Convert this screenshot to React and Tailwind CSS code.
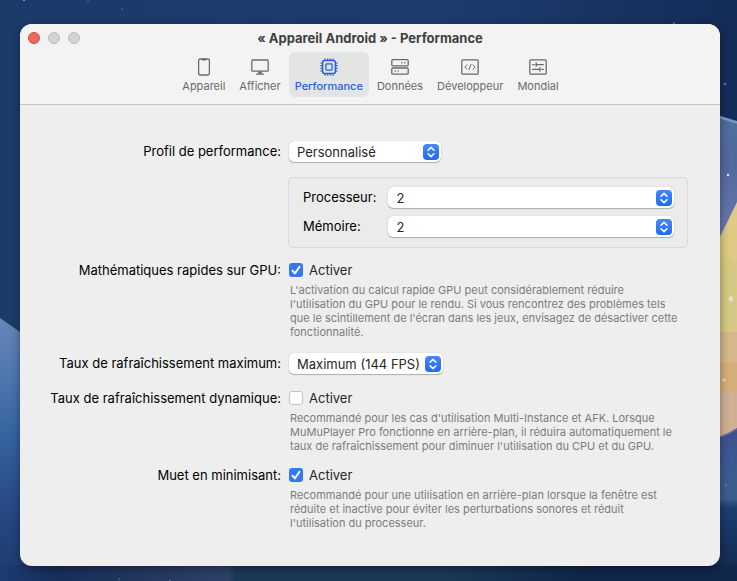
import { useState } from "react";

const tabs = [
  { id: "appareil", label: "Appareil", icon: PhoneIcon },
  { id: "afficher", label: "Afficher", icon: DisplayIcon },
  { id: "performance", label: "Performance", icon: ChipIcon },
  { id: "donnees", label: "Données", icon: DrivesIcon },
  { id: "developpeur", label: "Développeur", icon: CodeIcon },
  { id: "mondial", label: "Mondial", icon: SlidersIcon },
];

function Icon({ children }) {
  return (
    <svg
      viewBox="0 0 18 18"
      className="h-[18px] w-[18px]"
      fill="none"
      stroke="currentColor"
      strokeWidth="1.3"
      strokeLinecap="round"
      strokeLinejoin="round"
      aria-hidden="true"
    >
      {children}
    </svg>
  );
}

function PhoneIcon() {
  return (
    <Icon>
      <rect x="3.6" y="1" width="10.8" height="16" rx="1.8" />
      <path d="M7.3 1.6h3.4" strokeWidth="1.6" />
    </Icon>
  );
}

function DisplayIcon() {
  return (
    <Icon>
      <rect x="0.8" y="2" width="16.4" height="11.2" rx="1" />
      <path d="M7.4 13.6h3.2l.5 2.2H6.9z" fill="currentColor" stroke="none" />
      <path d="M5.6 16.2h6.8" strokeWidth="1.2" />
    </Icon>
  );
}

function ChipIcon() {
  return (
    <Icon>
      <rect x="2.6" y="2.6" width="12.8" height="12.8" rx="2" strokeWidth="1.5" />
      <rect x="5.9" y="5.9" width="6.2" height="6.2" rx="0.8" />
      <path
        d="M5 2.2V.8M7.7 2.2V.8M10.3 2.2V.8M13 2.2V.8M5 17.2v-1.4M7.7 17.2v-1.4M10.3 17.2v-1.4M13 17.2v-1.4M2.2 5H.8M2.2 7.7H.8M2.2 10.3H.8M2.2 13H.8M17.2 5h-1.4M17.2 7.7h-1.4M17.2 10.3h-1.4M17.2 13h-1.4"
        strokeWidth="1.2"
      />
    </Icon>
  );
}

function DrivesIcon() {
  return (
    <Icon>
      <rect x="0.8" y="1.6" width="16.4" height="6.2" rx="1" />
      <rect x="0.8" y="10" width="16.4" height="6.2" rx="1" />
      <path d="M10.9 4.7h.1M13.7 4.7h.1M4.3 13.1h.1M7.1 13.1h.1" strokeWidth="1.5" />
    </Icon>
  );
}

function CodeIcon() {
  return (
    <Icon>
      <rect x="0.8" y="1.8" width="16.4" height="14.4" rx="1" />
      <path d="M6 6.8 3.9 9 6 11.2M12 6.8 14.1 9 12 11.2M9.9 6.4l-1.8 5.2" strokeWidth="1" />
    </Icon>
  );
}

function SlidersIcon() {
  return (
    <Icon>
      <rect x="0.8" y="1.8" width="16.4" height="14.4" rx="1" />
      <path d="M3.6 6.6h1.6M7 6.6h7.4M3.6 11.4H11M12.8 11.4h1.6" strokeWidth="1.1" />
      <path d="M7.2 4.9v3.4M10.9 9.7v3.4" strokeWidth="1.3" />
    </Icon>
  );
}

function Wallpaper() {
  return (
    <svg
      viewBox="0 0 737 581"
      preserveAspectRatio="none"
      className="absolute inset-0 h-full w-full"
      aria-hidden="true"
    >
      <defs>
        <linearGradient id="sky" x1="0" y1="0" x2="1" y2="0">
          <stop offset="0" stopColor="#1d3b69" />
          <stop offset="0.6" stopColor="#1d3d6e" />
          <stop offset="1" stopColor="#142c58" />
        </linearGradient>
        <linearGradient id="hill" x1="0" y1="0" x2="0" y2="1">
          <stop offset="0" stopColor="#6685b8" />
          <stop offset="0.2" stopColor="#5079b0" />
          <stop offset="0.45" stopColor="#35639f" />
          <stop offset="0.75" stopColor="#254781" />
          <stop offset="1" stopColor="#1c3b6e" />
        </linearGradient>
        <linearGradient id="ring" x1="0" y1="0" x2="0" y2="1">
          <stop offset="0" stopColor="#4d6f9c" />
          <stop offset="0.3" stopColor="#52699f" />
          <stop offset="0.7" stopColor="#7079b4" />
        </linearGradient>
        <linearGradient id="sea" x1="0" y1="0" x2="0" y2="1">
          <stop offset="0" stopColor="#40508f" />
          <stop offset="0.25" stopColor="#3b5a92" />
          <stop offset="0.46" stopColor="#3a5f8a" />
          <stop offset="0.52" stopColor="#1d3f70" />
          <stop offset="1" stopColor="#10264a" />
        </linearGradient>
        <linearGradient id="ground" x1="0" y1="0" x2="1" y2="0">
          <stop offset="0" stopColor="#1c3b70" />
          <stop offset="0.08" stopColor="#182e58" />
          <stop offset="0.31" stopColor="#2e4168" />
          <stop offset="0.32" stopColor="#1c3857" />
          <stop offset="0.6" stopColor="#1b3856" />
          <stop offset="0.8" stopColor="#10264a" />
          <stop offset="1" stopColor="#10264a" />
        </linearGradient>
      </defs>
      <rect width="737" height="581" fill="url(#sky)" />
      <path d="M0 318 60 360V581H0z" fill="url(#hill)" />
      <path d="M700 110 737 121V300H700z" fill="url(#ring)" />
      <path d="M700 111 737 122.500" stroke="#7d9abd" strokeWidth="2.500" />
      <path d="M737 202 700 278V450H737z" fill="#dfca83" />
      <path d="M700 254 737 259V332H700z" fill="#d6c982" />
      <path d="M700 332H737V363H700z" fill="#d5b88c" />
      <path d="M700 363H737V391H700z" fill="#d6ae78" />
      <path d="M700 391H737V450H700z" fill="#d0b095" />
      <path d="M700 441Q722 438 737 428V581H700z" fill="url(#sea)" />
      <path d="M700 442Q722 439 737 429" stroke="#6a76b0" fill="none" />
      <rect y="565" width="737" height="16" fill="url(#ground)" />
      <g fill="#8fb0e0">
        <circle cx="24" cy="0" r="1" />
        <circle cx="88" cy="1" r="0.6" />
        <circle cx="122" cy="9" r="0.6" />
        <circle cx="674" cy="23" r="0.8" />
        <circle cx="725" cy="84" r="1.6" fill="#4568c8" />
        <circle cx="728" cy="175" r="1.2" fill="#dfe6f5" />
        <circle cx="731" cy="299" r="2.4" fill="#e2e4d8" />
        <circle cx="724" cy="380" r="1.6" fill="#e8dcc0" />
        <circle cx="726" cy="485" r="0.8" />
        <circle cx="119" cy="579" r="0.8" opacity="0.6" />
        <circle cx="170" cy="581" r="1" opacity="0.6" />
      </g>
    </svg>
  );
}

function Select({ id, value, onChange, options, className }) {
  return (
    <div className={`relative ${className}`}>
      <select
        id={id}
        value={value}
        onChange={(e) => onChange(e.target.value)}
        className="block h-[21px] w-full appearance-none rounded-[5px] bg-white pr-6 pl-2 text-[13px] leading-5 text-[#262626] shadow-[0_0_1px_rgba(0,0,0,0.3),0_1px_1px_rgba(0,0,0,0.25)] outline-none"
      >
        {options.map((o) => (
          <option key={o}>{o}</option>
        ))}
      </select>
      <span className="pointer-events-none absolute top-[3px] right-0.5 grid h-4 w-4 place-items-center rounded-[4px] bg-gradient-to-b from-[#4389fa] to-[#2569f0] text-white">
        <svg
          viewBox="0 0 16 16"
          className="h-4 w-4"
          fill="none"
          stroke="currentColor"
          strokeWidth="1.5"
          strokeLinecap="round"
          strokeLinejoin="round"
          aria-hidden="true"
        >
          <path d="M5 6.2 8 3.4l3 2.8M5 9.8l3 2.8 3-2.8" />
        </svg>
      </span>
    </div>
  );
}

function Checkbox({ id, labelledBy, checked, onChange }) {
  return (
    <label className="flex h-5 w-fit items-center gap-1.5 text-[13px] leading-5 text-[#262626]">
      <span className="relative h-3.5 w-3.5">
        <input
          id={id}
          type="checkbox"
          checked={checked}
          onChange={(e) => onChange(e.target.checked)}
          aria-describedby={labelledBy}
          className="block h-3.5 w-3.5 appearance-none rounded-[3px] border border-[#c4c4c4] bg-white checked:border-transparent checked:bg-[#3478f6]"
        />
        {checked && (
          <svg
            viewBox="0 0 14 14"
            className="pointer-events-none absolute inset-0 h-3.5 w-3.5"
            fill="none"
            stroke="white"
            strokeWidth="1.9"
            strokeLinecap="round"
            strokeLinejoin="round"
            aria-hidden="true"
          >
            <path d="M3.4 7.6 5.9 10.4 10.5 3.7" />
          </svg>
        )}
      </span>
      <span>Activer</span>
    </label>
  );
}

function Row({ id, label, children }) {
  return (
    <div className="grid grid-cols-[233px_1fr] gap-x-2">
      <label
        htmlFor={id}
        id={`${id}-label`}
        className="text-right text-[13px] leading-[21px] whitespace-nowrap"
      >
        {label}
      </label>
      <div>{children}</div>
    </div>
  );
}

function Hint({ children }) {
  return (
    <p className="mt-[3px] pl-px text-[11px] leading-[14px] whitespace-nowrap text-[#7c7c7c]">
      {children}
    </p>
  );
}

export default function App() {
  const [tab, setTab] = useState("performance");
  const [profile, setProfile] = useState("Personnalisé");
  const [cpu, setCpu] = useState("2");
  const [memory, setMemory] = useState("2");
  const [fastMath, setFastMath] = useState(true);
  const [fps, setFps] = useState("Maximum (144 FPS)");
  const [dynamicRate, setDynamicRate] = useState(false);
  const [mute, setMute] = useState(true);

  return (
    <div className="relative min-h-screen overflow-hidden bg-[#1c3966] pt-6 pr-[17px] pb-[15px] pl-5 font-[Inter,sans-serif] text-black">
      <Wallpaper />
      <main className="relative overflow-hidden rounded-xl bg-[#eeeeef] shadow-[0_2px_10px_rgba(0,0,0,0.4)]">
        <header className="border-b border-[#c3c3c4] bg-[#f3f3f4]">
          <div className="grid h-7 grid-cols-[1fr_auto_1fr] items-center px-2">
            <div className="flex gap-2">
              <button
                type="button"
                aria-label="Fermer"
                className="h-3 w-3 rounded-full border border-[#d34b3d] bg-[#ed6a5e]"
              />
              <button
                type="button"
                aria-label="Réduire"
                className="h-3 w-3 rounded-full border border-[#b9bab9] bg-[#d3d5d4]"
              />
              <button
                type="button"
                aria-label="Agrandir"
                className="h-3 w-3 rounded-full border border-[#b9bab9] bg-[#d3d5d4]"
              />
            </div>
            <h1 className="text-[13px] leading-5 font-bold text-[#404040]">
              « Appareil Android » - Performance
            </h1>
          </div>
          <nav className="flex justify-center gap-0.5 pb-[7px] pl-px">
            {tabs.map(({ id, label, icon: TabIcon }) => (
              <button
                key={id}
                type="button"
                onClick={() => setTab(id)}
                className={`flex h-[45px] flex-col items-center gap-0.5 rounded-md px-1.5 pt-1.5 text-[11px] leading-4 ${
                  tab === id ? "bg-[#e3e4e4] font-medium text-[#2a5fdc]" : "text-[#6a6a6a]"
                }`}
              >
                <TabIcon />
                {label}
              </button>
            ))}
          </nav>
        </header>

        <form className="flex flex-col gap-3 pt-[34px] pr-8 pb-9 pl-7">
          <div className="pt-0.5 pb-[3px]">
            <Row id="profile" label="Profil de performance:">
              <Select
                id="profile"
                value={profile}
                onChange={setProfile}
                options={["Personnalisé", "Faible", "Moyen", "Élevé"]}
                className="w-[152px]"
              />
            </Row>
          </div>

          <div className="ml-60 grid grid-cols-[auto_1fr] gap-x-3 gap-y-2 rounded-[5px] border border-[#d8d8d9] bg-[#ebebec] pt-[9px] pb-2.5 pr-[13px] pl-3.5 text-[13px] leading-[21px]">
            <label htmlFor="cpu">Processeur:</label>
            <Select
              id="cpu"
              value={cpu}
              onChange={setCpu}
              options={["1", "2", "4", "8"]}
              className="w-full"
            />
            <label htmlFor="memory">Mémoire:</label>
            <Select
              id="memory"
              value={memory}
              onChange={setMemory}
              options={["1", "2", "4", "8"]}
              className="w-full"
            />
          </div>

          <Row id="fast-math" label="Mathématiques rapides sur GPU:">
            <Checkbox
              id="fast-math"
              labelledBy="fast-math-label"
              checked={fastMath}
              onChange={setFastMath}
            />
            <Hint>
              L'activation du calcul rapide GPU peut considérablement réduire
              <br />
              l'utilisation du GPU pour le rendu. Si vous rencontrez des problèmes tels
              <br />
              que le scintillement de l'écran dans les jeux, envisagez de désactiver cette
              <br />
              fonctionnalité.
            </Hint>
          </Row>

          <div className="py-0.5">
            <Row id="fps" label="Taux de rafraîchissement maximum:">
              <Select
                id="fps"
                value={fps}
                onChange={setFps}
                options={["Maximum (144 FPS)", "120 FPS", "60 FPS", "30 FPS"]}
                className="w-[154px]"
              />
            </Row>
          </div>

          <Row id="dynamic-rate" label="Taux de rafraîchissement dynamique:">
            <Checkbox
              id="dynamic-rate"
              labelledBy="dynamic-rate-label"
              checked={dynamicRate}
              onChange={setDynamicRate}
            />
            <Hint>
              Recommandé pour les cas d'utilisation Multi-Instance et AFK. Lorsque
              <br />
              MuMuPlayer Pro fonctionne en arrière-plan, il réduira automatiquement le
              <br />
              taux de rafraîchissement pour diminuer l'utilisation du CPU et du GPU.
            </Hint>
          </Row>

          <Row id="mute" label="Muet en minimisant:">
            <Checkbox
              id="mute"
              labelledBy="mute-label"
              checked={mute}
              onChange={setMute}
            />
            <Hint>
              Recommandé pour une utilisation en arrière-plan lorsque la fenêtre est
              <br />
              réduite et inactive pour éviter les perturbations sonores et réduit
              <br />
              l'utilisation du processeur.
            </Hint>
          </Row>
        </form>
      </main>
    </div>
  );
}
